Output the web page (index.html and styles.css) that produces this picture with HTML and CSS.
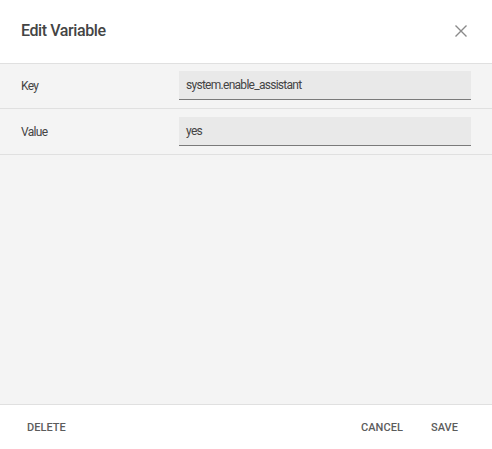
FILE: index.html
```html
<!DOCTYPE html>
<html>
<head>
<meta charset="utf-8">
<link rel="stylesheet" href="styles.css">
</head>
<body>
<div class="dialog">
  <header class="header">
    <h1 class="title">Edit Variable</h1>
    <button class="close" aria-label="Close">
      <svg width="12" height="12" viewBox="0 0 12 12"><path d="M0.5 0.5L11.5 11.5M11.5 0.5L0.5 11.5" stroke="#8a8a8a" stroke-width="1.4" fill="none"/></svg>
    </button>
  </header>
  <main class="body">
    <div class="row">
      <div class="label">Key</div>
      <div class="field">system.enable_assistant</div>
    </div>
    <div class="row">
      <div class="label">Value</div>
      <div class="field">yes</div>
    </div>
  </main>
  <footer class="footer">
    <button class="btn">DELETE</button>
    <div class="spacer"></div>
    <button class="btn">CANCEL</button>
    <button class="btn">SAVE</button>
  </footer>
</div>
</body>
</html>
```
FILE: styles.css
```css
html, body {
  margin: 0;
  padding: 0;
  height: 100%;
}
body {
  font-family: Roboto, "Noto Sans", sans-serif;
  background: #ffffff;
}
.dialog {
  display: flex;
  flex-direction: column;
  height: 449px;
  width: 492px;
}
.header {
  height: 63px;
  border-bottom: 1px solid #e0e0e0;
  display: flex;
  align-items: center;
  padding: 0 22px 0 21px;
  box-sizing: content-box;
}
.title {
  flex: 1;
  margin: 0;
  font-size: 16px;
  font-weight: 500;
  color: #444;
  line-height: 20px;
  letter-spacing: -0.4px;
  padding-bottom: 2px;
}
.close {
  border: 0;
  background: none;
  padding: 0;
  width: 14px;
  height: 14px;
  display: flex;
  align-items: center;
  justify-content: center;
  margin-right: 2px;
  margin-bottom: 1px;
}
.body {
  flex: 1;
  background: #f4f4f4;
  border-bottom: 1px solid #e0e0e0;
}
.row {
  display: flex;
  align-items: center;
  padding: 7px 21px 8px 21px;
  border-bottom: 1px solid #e0e0e0;
}
.row + .row {
  padding-top: 8px;
}
.label {
  width: 158px;
  font-size: 12px;
  letter-spacing: -0.7px;
  color: #444;
}
.field {
  width: 285px;
  height: 28px;
  background: #e9e9e9;
  border-bottom: 1px solid #7a7a7a;
  padding: 0 0 0 7px;
  font-size: 12px;
  letter-spacing: -0.72px;
  color: #444;
  display: flex;
  align-items: center;
}
.footer {
  height: 44px;
  display: flex;
  align-items: center;
  padding: 0 34px 0 27px;
}
.spacer { flex: 1; }
.btn {
  border: 0;
  background: none;
  padding: 0;
  font-family: Roboto, "Noto Sans", sans-serif;
  font-size: 11px;
  font-weight: 500;
  color: #5c5c5c;
  letter-spacing: 0.05px;
}
.btn + .btn {
  margin-left: 28px;
}
```
